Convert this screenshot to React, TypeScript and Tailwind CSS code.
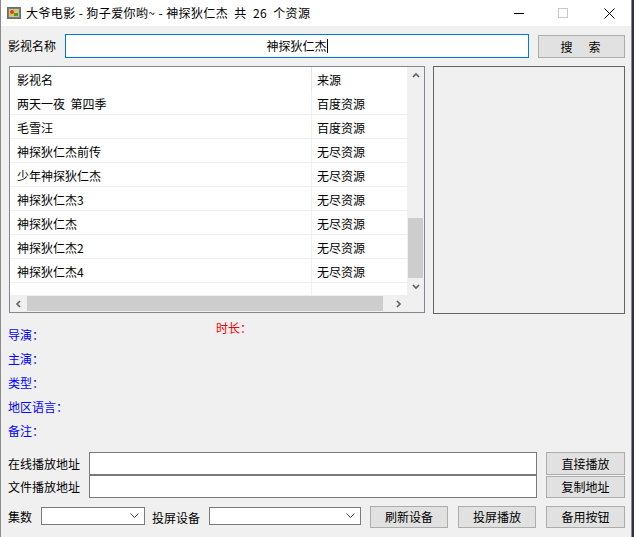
import React from "react";

const font = { fontFamily: '"Noto Sans CJK SC", "Liberation Sans", sans-serif' };

const rows: [string, string][] = [
  ["两天一夜 第四季", "百度资源"],
  ["毛雪汪", "百度资源"],
  ["神探狄仁杰前传", "无尽资源"],
  ["少年神探狄仁杰", "无尽资源"],
  ["神探狄仁杰3", "无尽资源"],
  ["神探狄仁杰", "无尽资源"],
  ["神探狄仁杰2", "无尽资源"],
  ["神探狄仁杰4", "无尽资源"],
];

function Btn({ label, className = "" }: { label: string; className?: string }) {
  return (
    <div className={`flex items-center justify-center bg-[#e1e1e1] border border-[#adadad] text-[12px] text-black ${className}`}>
      {label}
    </div>
  );
}

function Chevron({ dir }: { dir: "up" | "down" | "left" | "right" }) {
  const d = {
    up: "M1 5 L4 2 L7 5",
    down: "M1 2 L4 5 L7 2",
    left: "M5 1 L2 4 L5 7",
    right: "M2 1 L5 4 L2 7",
  }[dir];
  return (
    <svg width="8" height="8" viewBox="0 0 8 8">
      <path d={d} fill="none" stroke="#606060" strokeWidth="1.6" />
    </svg>
  );
}

function Combo({ className = "" }: { className?: string }) {
  return (
    <div className={`flex items-center justify-end bg-white border border-[#7a7a7a] pr-[5px] ${className}`}>
      <svg width="9" height="6" viewBox="0 0 9 6">
        <path d="M0.5 0.5 L4.5 4.5 L8.5 0.5" fill="none" stroke="#444" strokeWidth="1" />
      </svg>
    </div>
  );
}

export default function App() {
  return (
    <div className="flex w-[634px] h-[537px] bg-[#2d3340] overflow-hidden" style={font}>
      <div className="w-[632px] h-[537px] flex flex-col bg-[#f0f0f0] border-l border-r border-[#8a8a8a] text-[12px] text-black">
        {/* title bar */}
        <div className="h-[26px] shrink-0 bg-white flex items-center">
          <svg width="14" height="12" viewBox="0 0 14 12" className="ml-[6px]">
            <rect x="0.5" y="0.5" width="13" height="11" fill="#5b7fc4" stroke="#6d6d6d" />
            <rect x="2" y="2" width="10" height="8" fill="#e8c440" />
            <circle cx="5" cy="5" r="2" fill="#d04030" />
            <rect x="7" y="6" width="4" height="3" fill="#3aa050" />
          </svg>
          <div className="ml-[5px] text-[12px] leading-none whitespace-pre tracking-[0.4px]">大爷电影 - 狗子爱你哟~ - 神探狄仁杰  共  26  个资源</div>
          <div className="flex-1" />
          <div className="w-[10px] h-px bg-black mr-[34px]" />
          <div className="w-[10px] h-[10px] border border-[#c8c8c8] mr-[36px]" />
          <svg width="11" height="11" viewBox="0 0 11 11" className="mr-[16px]">
            <path d="M0.5 0.5 L10.5 10.5 M10.5 0.5 L0.5 10.5" stroke="#000" strokeWidth="1" />
          </svg>
        </div>

        {/* search row */}
        <div className="flex items-start mt-[8px] pl-[7px] h-[24px]">
          <div className="h-[24px] flex items-center w-[57px]">影视名称</div>
          <div className="w-[464px] h-[24px] bg-white border border-[#0078d7] flex items-center justify-center">
            <span>神探狄仁杰</span>
            <span className="w-px h-[14px] bg-black" />
          </div>
          <Btn label="搜　索" className="ml-[9px] mt-px w-[87px] h-[23px] tracking-[2px]" />
        </div>

        {/* list + panel */}
        <div className="flex items-start mt-[8px] pl-[8px]">
          <div className="w-[416px] h-[247px] bg-white border border-[#828790] flex flex-col">
            <div className="flex flex-1 min-h-0">
              <div className="flex-1 flex flex-col">
                <div className="h-[24px] flex items-center">
                  <div className="w-[301px] pl-[7px] pt-[2px]">影视名</div>
                  <div className="h-[24px] border-l border-[#e5e5e5] pl-[5px] pt-[2px] flex items-center">来源</div>
                </div>
                {rows.map(([name, src], i) => (
                  <div key={i} className="h-[24px] flex items-center border-b border-[#f0f0f0]">
                    <div className="w-[301px] pl-[7px] pt-[2px] whitespace-pre">{name.replace(" ", "  ")}</div>
                    <div className="h-[23px] border-l border-[#f0f0f0] pl-[5px] pt-[2px] flex items-center">{src}</div>
                  </div>
                ))}
                <div className="flex-1 flex">
                  <div className="w-[301px]" />
                  <div className="border-l border-[#f0f0f0]" />
                </div>
              </div>
              <div className="w-[17px] bg-[#f0f0f0] flex flex-col items-center">
                <div className="h-[17px] flex items-center justify-center"><Chevron dir="up" /></div>
                <div className="flex-1 w-full flex flex-col px-px">
                  <div className="h-[134px]" />
                  <div className="h-[60px] bg-[#cdcdcd]" />
                </div>
                <div className="h-[17px] flex items-center justify-center"><Chevron dir="down" /></div>
              </div>
            </div>
            <div className="h-[17px] flex bg-[#f0f0f0]">
              <div className="w-[17px] flex items-center justify-center"><Chevron dir="left" /></div>
              <div className="flex-1 py-px flex">
                <div className="w-[356px] bg-[#cdcdcd]" />
              </div>
              <div className="w-[17px] flex items-center justify-center"><Chevron dir="right" /></div>
              <div className="w-[17px]" />
            </div>
          </div>
          <div className="ml-[8px] w-[192px] h-[248px] border border-[#646464]" />
        </div>

        {/* info */}
        <div className="flex h-[138px] pl-[7px]">
          <div className="w-[208px] pt-[9px] flex flex-col text-[#0000ff]">
            <div className="h-[24px] flex items-center">导演：</div>
            <div className="h-[24px] flex items-center">主演：</div>
            <div className="h-[24px] flex items-center">类型：</div>
            <div className="h-[24px] flex items-center">地区语言：</div>
            <div className="h-[24px] flex items-center">备注：</div>
          </div>
          <div className="pt-[5px] text-[#ff0000]">时长：</div>
        </div>

        {/* address rows */}
        <div className="flex pl-[7px] h-[23px] items-stretch">
          <div className="w-[81px] flex items-center">在线播放地址</div>
          <div className="w-[448px] bg-white border border-[#7a7a7a]" />
          <Btn label="直接播放" className="ml-[9px] w-[79px]" />
        </div>
        <div className="flex pl-[7px] h-[23px] items-stretch">
          <div className="w-[81px] flex items-center">文件播放地址</div>
          <div className="w-[448px] bg-white border border-[#7a7a7a]" />
          <Btn label="复制地址" className="ml-[9px] mt-px w-[79px]" />
        </div>

        {/* bottom row */}
        <div className="flex pl-[7px] mt-[8px] h-[22px] items-start">
          <div className="w-[33px] h-[22px] flex items-center">集数</div>
          <Combo className="mt-px w-[104px] h-[18px]" />
          <div className="ml-[7px] w-[57px] h-[24px] flex items-center">投屏设备</div>
          <Combo className="mt-px w-[152px] h-[18px]" />
          <Btn label="刷新设备" className="ml-[9px] w-[78px] h-[22px]" />
          <Btn label="投屏播放" className="ml-[10px] w-[78px] h-[22px]" />
          <Btn label="备用按钮" className="ml-[10px] w-[79px] h-[22px]" />
        </div>
      </div>
    </div>
  );
}
